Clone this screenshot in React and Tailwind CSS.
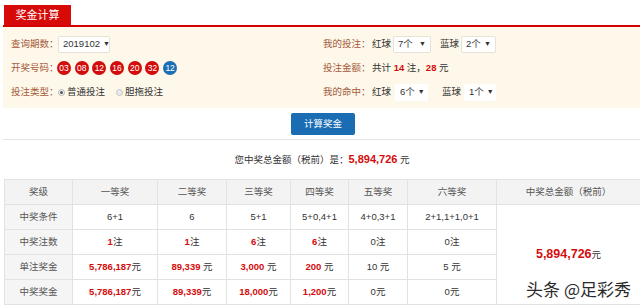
import React from 'react';

const RED = 'text-[#d40c0c]';

const BALLS = [
  { n: '03', blue: false },
  { n: '08', blue: false },
  { n: '12', blue: false },
  { n: '16', blue: false },
  { n: '20', blue: false },
  { n: '32', blue: false },
  { n: '12', blue: true }
];

const COLS = [68, 85, 69, 64, 58, 59, 89, 144];

const ROWS = [
  { label: '中奖条件', cells: ['6+1', '6', '5+1', '5+0,4+1', '4+0,3+1', '2+1,1+1,0+1'] },
  {
    label: '中奖注数',
    cells: [
      { v: '1', u: '注', hot: true },
      { v: '1', u: '注', hot: true },
      { v: '6', u: '注', hot: true },
      { v: '6', u: '注', hot: true },
      { v: '0', u: '注' },
      { v: '0', u: '注' }
    ]
  },
  {
    label: '单注奖金',
    cells: [
      { v: '5,786,187', u: '元', hot: true },
      { v: '89,339', u: ' 元', hot: true },
      { v: '3,000', u: ' 元', hot: true },
      { v: '200', u: ' 元', hot: true },
      { v: '10', u: ' 元' },
      { v: '5', u: ' 元' }
    ]
  },
  {
    label: '中奖奖金',
    cells: [
      { v: '5,786,187', u: '元', hot: true },
      { v: '89,339', u: '元', hot: true },
      { v: '18,000', u: '元', hot: true },
      { v: '1,200', u: '元', hot: true },
      { v: '0', u: '元' },
      { v: '0', u: '元' }
    ]
  }
];

const Label = ({ children }) => (
  <span className="text-[#a5583a] w-[47px] shrink-0 whitespace-nowrap">{children}</span>
);

const Select = ({ value, className = '' }) => (
  <div className={`h-[17px] shrink-0 whitespace-nowrap bg-white border border-[#e6e2d6] rounded-[2px] flex items-center justify-between gap-[3px] px-[4px] text-[#333] ${className}`}>
    <span>{value}</span>
    <span className="text-[7px]">▼</span>
  </div>
);

const Cell = ({ c }) => {
  if (typeof c === 'string') return <span>{c}</span>;
  return (
    <span>
      <span className={c.hot ? `${RED} font-bold` : ''}>{c.v}</span>
      <span className="whitespace-pre">{c.u}</span>
    </span>
  );
};

export default function App() {
  return (
    <div className="w-[640px] h-[308px] bg-white overflow-hidden relative text-[9.5px] text-[#333] font-['Liberation_Sans','Noto_Sans_CJK_SC',sans-serif]">
      {/* tab header */}
      <div className="pt-[5px] pl-[4px] ml-[3px] border-b-2 border-[#d40000]">
        <div className="w-[67px] h-[20px] bg-[#d70a0a] text-white text-[11px] flex items-center justify-center -ml-[3px]">
          奖金计算
        </div>
      </div>

      {/* form panel */}
      <div className="ml-[3px] h-[81px] bg-[#fdf8ea] flex pt-[5px]">
        <div className="w-[320px] pl-[8px] flex flex-col">
          <div className="h-[24px] flex items-center">
            <Label>查询期数：</Label>
            <Select value="2019102" className="w-[52px]" />
          </div>
          <div className="h-[24px] flex items-center">
            <Label>开奖号码：</Label>
            <div className="flex gap-[3.7px] -ml-[1px]">
              {BALLS.map((b, i) => (
                <div
                  key={i}
                  className={`w-[14px] h-[14px] rounded-full text-white text-[8.5px] flex items-center justify-center ${b.blue ? 'bg-[#1c6fb3]' : 'bg-[#d20b0b]'}`}
                >
                  {b.n}
                </div>
              ))}
            </div>
          </div>
          <div className="h-[24px] flex items-center">
            <Label>投注类型：</Label>
            <div className="flex items-center">
              <span className="w-[7px] h-[7px] rounded-full border border-[#b5b5b5] bg-[#f4f4f4] flex items-center justify-center">
                <span className="w-[3px] h-[3px] rounded-full bg-[#555]"></span>
              </span>
              <span className="ml-[2px]">普通投注</span>
              <span className="ml-[11px] w-[7px] h-[7px] rounded-full border border-[#c5c5c5] bg-[#e9e9e9]"></span>
              <span className="ml-[2px]">胆拖投注</span>
            </div>
          </div>
        </div>

        <div className="flex flex-col">
          <div className="h-[24px] flex items-center">
            <Label>我的投注：</Label>
            <span className="ml-[2px]">红球</span>
            <Select value="7个" className="w-[38px] ml-[2px]" />
            <span className="ml-[9px]">蓝球</span>
            <Select value="2个" className="w-[35px] ml-[2px]" />
          </div>
          <div className="h-[24px] flex items-center">
            <Label>投注金额：</Label>
            <span className="ml-[2px] whitespace-pre">
              共计 <span className={`${RED} font-bold`}>14</span> 注，<span className={`${RED} font-bold`}>28</span> 元
            </span>
          </div>
          <div className="h-[24px] flex items-center">
            <Label>我的命中：</Label>
            <span className="ml-[2px]">红球</span>
            <Select value="6个" className="w-[33px] ml-[4px] px-[3px] border-transparent" />
            <span className="ml-[14px]">蓝球</span>
            <Select value="1个" className="w-[32px] ml-[3px] px-[3px] border-transparent" />
          </div>
        </div>
      </div>

      {/* button */}
      <div className="flex justify-center mt-[5px] pl-[6px]">
        <div className="w-[64px] h-[22px] bg-[#1a6db3] rounded-[2px] text-white text-[9.5px] flex items-center justify-center">
          计算奖金
        </div>
      </div>
      <div className="ml-[3px] mt-[4px] border-t border-[#e6e6e6]"></div>

      {/* summary */}
      <div className="h-[39px] flex items-center justify-center pl-[4px]">
        <span className="whitespace-pre">
          您中奖总金额（税前）是：<span className={`${RED} font-bold text-[11px]`}>5,894,726</span> 元
        </span>
      </div>

      {/* result table */}
      <table className="ml-[4px] border-collapse table-fixed w-[636px]">
        <colgroup>
          {COLS.map((w, i) => (
            <col key={i} style={{ width: w }} />
          ))}
        </colgroup>
        <thead>
          <tr className="h-[25px] bg-[#f3f3f3] text-[#555]">
            {['奖级', '一等奖', '二等奖', '三等奖', '四等奖', '五等奖', '六等奖', '中奖总金额（税前）'].map((h, i) => (
              <th key={i} className="font-normal border border-[#e2e2e2] text-center">
                {h}
              </th>
            ))}
          </tr>
        </thead>
        <tbody>
          {ROWS.map((r, ri) => (
            <tr key={ri} className="h-[25px]">
              <td className="bg-[#f5f5f5] text-[#555] border border-[#e2e2e2] text-center">{r.label}</td>
              {r.cells.map((c, ci) => (
                <td key={ci} className="border border-[#e2e2e2] text-center">
                  <Cell c={c} />
                </td>
              ))}
              {ri === 0 && (
                <td rowSpan={4} className="border border-[#e2e2e2] text-center align-middle">
                  <span className={`${RED} font-bold text-[12.5px]`}>5,894,726</span>
                  <span>元</span>
                </td>
              )}
            </tr>
          ))}
        </tbody>
      </table>

      {/* watermark */}
      <div className="absolute right-[9px] bottom-[7px] text-[17px] text-[#2b2b2b] font-['Noto_Sans_CJK_SC',sans-serif] [text-shadow:0_0_2px_#fff,0_0_2px_#fff]">
        头条 @足彩秀
      </div>
    </div>
  );
}
